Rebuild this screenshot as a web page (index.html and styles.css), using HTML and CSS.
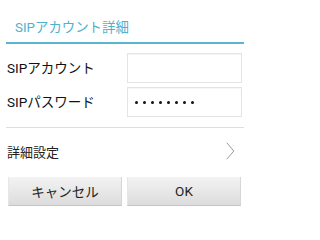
FILE: index.html
```html
<!DOCTYPE html>
<html lang="ja">
<head>
<meta charset="utf-8">
<title>SIPアカウント詳細</title>
<link rel="stylesheet" href="styles.css">
</head>
<body>
<div class="dialog">
  <div class="title">SIPアカウント詳細</div>
  <div class="rule"></div>
  <div class="form">
    <label class="label">SIPアカウント</label>
    <div class="input"></div>
    <label class="label">SIPパスワード</label>
    <div class="input pw">
      <span class="dot"></span><span class="dot"></span><span class="dot"></span><span class="dot"></span>
      <span class="dot"></span><span class="dot"></span><span class="dot"></span><span class="dot"></span>
    </div>
  </div>
  <div class="divider"></div>
  <div class="settings">
    <span class="settings-text">詳細設定</span>
    <svg class="chev" width="9" height="18" viewBox="0 0 9 18"><polyline points="0.8,0.8 7.8,9 0.8,17.2" fill="none" stroke="#9a9a9a" stroke-width="1"/></svg>
  </div>
  <div class="buttons">
    <div class="btn">キャンセル</div>
    <div class="btn">OK</div>
  </div>
</div>
</body>
</html>
```
FILE: styles.css
```css
html, body {
  margin: 0;
  padding: 0;
  background: #ffffff;
}
body {
  font-family: Roboto, "Noto Sans CJK JP", sans-serif;
  color: #1a1a1a;
  width: 250px;
  height: 225px;
  overflow: hidden;
}
.title {
  box-sizing: border-box;
  height: 42px;
  padding: 18px 0 0 15px;
  font-size: 13.4px;
  line-height: 20px;
  color: #4fb1cd;
}
.rule {
  height: 2px;
  margin: 0 6px;
  background: #5ab6d0;
}
.form {
  display: grid;
  grid-template-columns: 120px 115px;
  grid-auto-rows: 30px;
  row-gap: 4px;
  padding: 9px 8px 0 7px;
  align-items: center;
}
.label {
  font-size: 13.5px;
  line-height: 20px;
  color: #111;
}
.input {
  box-sizing: border-box;
  height: 30px;
  border: 1px solid #e4e4e4;
  box-shadow: inset 0 1px 1px rgba(0,0,0,0.04);
  background: #fff;
}
.pw {
  display: flex;
  align-items: center;
  gap: 5px;
  padding-left: 7px;
}
.dot {
  width: 3px;
  height: 3px;
  border-radius: 50%;
  background: #111;
}
.divider {
  height: 1px;
  margin: 10px 6px 0;
  background: #dedede;
}
.settings {
  height: 46px;
  display: flex;
  align-items: center;
  justify-content: space-between;
  padding: 0 15px 0 7px;
}
.settings-text {
  font-size: 13px;
  color: #222;
}
.chev {
  display: block;
}
.buttons {
  display: flex;
  gap: 5px;
  padding: 3px 9px 0 8px;
}
.btn {
  box-sizing: border-box;
  width: 114px;
  height: 29px;
  display: flex;
  align-items: center;
  justify-content: center;
  font-size: 13.5px;
  color: #222;
  background: linear-gradient(#f3f3f3, #dcdcdc);
  border-bottom: 1px solid #c4c4c4;
  border-right: 1px solid #d6d6d6;
  border-left: 1px solid #e6e6e6;
}
```
